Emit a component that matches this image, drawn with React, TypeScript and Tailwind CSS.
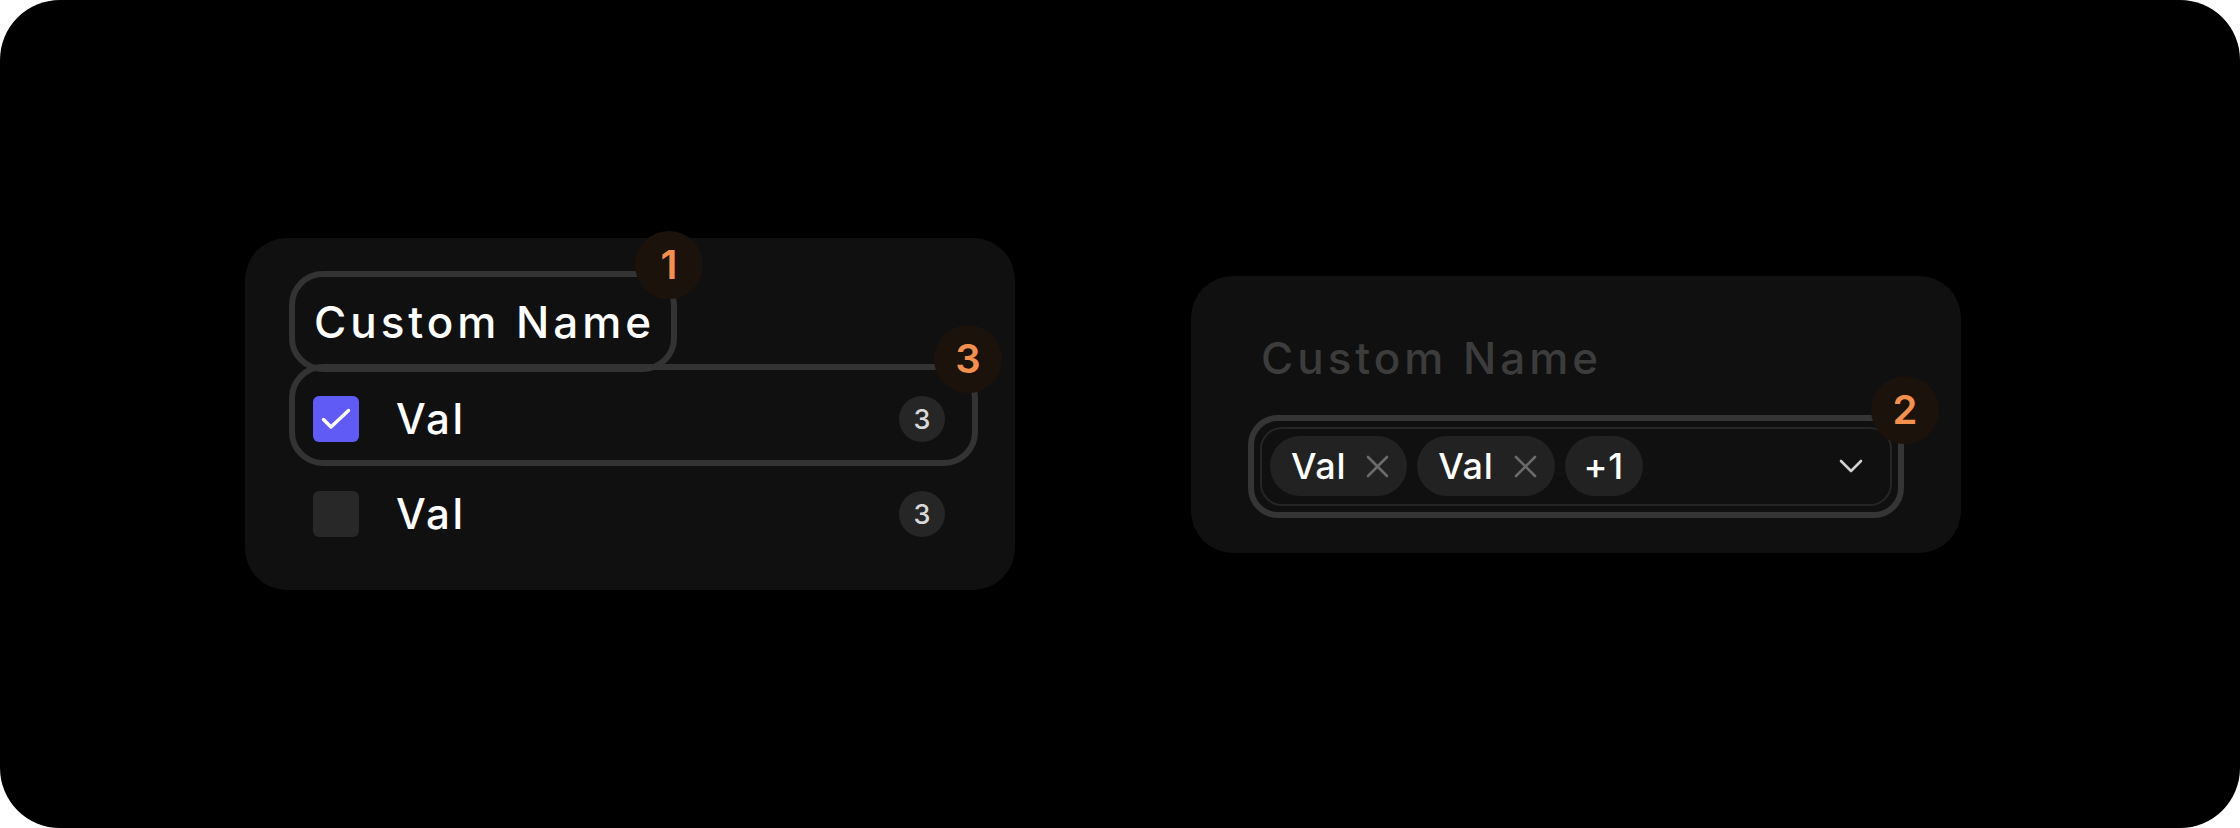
import React from 'react';

const Badge = ({ n, className }: { n: string; className: string }) => (
  <div
    className={`absolute w-[68px] h-[68px] rounded-full bg-[#1c120c] flex items-center justify-center text-[40px] leading-none font-semibold text-[#f2904f] ${className}`}
  >
    {n}
  </div>
);

const Count = () => (
  <div className="ml-auto w-[46px] h-[46px] rounded-full bg-[#262626] flex items-center justify-center text-[27px] leading-none font-medium text-[#d9d9d9]">
    3
  </div>
);

const CheckIcon = () => (
  <svg width="30" height="22" viewBox="0 0 30 22" fill="none">
    <path d="M2.5 11.5 10 19 27.5 2.5" stroke="white" strokeWidth="3.4" strokeLinecap="round" strokeLinejoin="round" />
  </svg>
);

const XIcon = () => (
  <svg width="23" height="23" viewBox="0 0 23 23" fill="none">
    <path d="M2 2 21 21M21 2 2 21" stroke="#6b6b6b" strokeWidth="2.6" strokeLinecap="round" />
  </svg>
);

const Chevron = () => (
  <svg width="24" height="14" viewBox="0 0 24 14" fill="none">
    <path d="M2 2l10 10L22 2" stroke="#d0d0d0" strokeWidth="2.6" strokeLinecap="round" strokeLinejoin="round" />
  </svg>
);

function ListCard() {
  return (
    <div className="w-[770px] h-[352px] shrink-0 bg-[#101010] rounded-[42px] pt-[33px] pl-[44px] pr-[37px] flex flex-col">
      {/* title */}
      <div className="relative z-10 self-start h-[101px] w-[388px] border-[6px] border-[#333333] rounded-[34px] flex items-center pl-[19px]">
        <span className="text-[44px] leading-[50px] font-medium text-white tracking-[0.09em]">Custom Name</span>
        <Badge n="1" className="-top-[46px] -right-[32px]" />
      </div>

      {/* checked row */}
      <div className="relative -mt-[8px] h-[102px] border-[6px] border-[#333333] rounded-[34px] flex items-center pl-[18px] pr-[27px]">
        <div className="w-[46px] h-[46px] rounded-[6px] bg-[#615bf6] flex items-center justify-center mt-[8px]">
          <CheckIcon />
        </div>
        <span className="ml-[37px] mt-[8px] text-[42px] leading-[50px] font-medium text-white tracking-[0.06em]">Val</span>
        <div className="ml-auto mt-[8px]">
          <Count />
        </div>
        <Badge n="3" className="-top-[45px] -right-[30px]" />
      </div>

      {/* unchecked row */}
      <div className="h-[96px] flex items-center pl-[24px] pr-[33px]">
        <div className="w-[46px] h-[46px] rounded-[6px] bg-[#282828]" />
        <span className="ml-[37px] text-[42px] leading-[50px] font-medium text-white tracking-[0.06em]">Val</span>
        <Count />
      </div>
    </div>
  );
}

const Chip = ({ label, removable }: { label: string; removable?: boolean }) => (
  <div
    className={`h-[60px] rounded-full bg-[#222222] flex items-center text-[36px] leading-none font-medium text-white tracking-[0.02em] ${
      removable ? 'pl-[21px] pr-[18px]' : 'px-[19px]'
    }`}
  >
    <span>{label}</span>
    {removable && (
      <span className="ml-[20px] flex">
        <XIcon />
      </span>
    )}
  </div>
);

function SelectCard() {
  return (
    <div className="w-[770px] h-[277px] shrink-0 bg-[#101010] rounded-[42px] pt-[57px] px-[57px] flex flex-col">
      <span className="pl-[13px] text-[44px] leading-[50px] font-medium text-[#3c3c3c] tracking-[0.09em]">Custom Name</span>

      <div className="relative mt-[32px] h-[103px] border-[6px] border-[#353535] rounded-[30px] p-[6px]">
        <div className="h-full border-2 border-[#262626] rounded-[22px] flex items-center gap-[10px] pl-[8px] pr-[27px]">
          <Chip label="Val" removable />
          <Chip label="Val" removable />
          <Chip label="+1" />
          <div className="ml-auto flex">
            <Chevron />
          </div>
        </div>
        <Badge n="2" className="-top-[45px] -right-[41px]" />
      </div>
    </div>
  );
}

export default function App() {
  return (
    <div className="w-[2240px] h-[828px] bg-white" style={{ fontFamily: 'Inter, "Noto Sans", sans-serif' }}>
      <div className="w-full h-full bg-black rounded-[60px] flex items-center pl-[245px] gap-[176px]">
        <ListCard />
        <SelectCard />
      </div>
    </div>
  );
}
